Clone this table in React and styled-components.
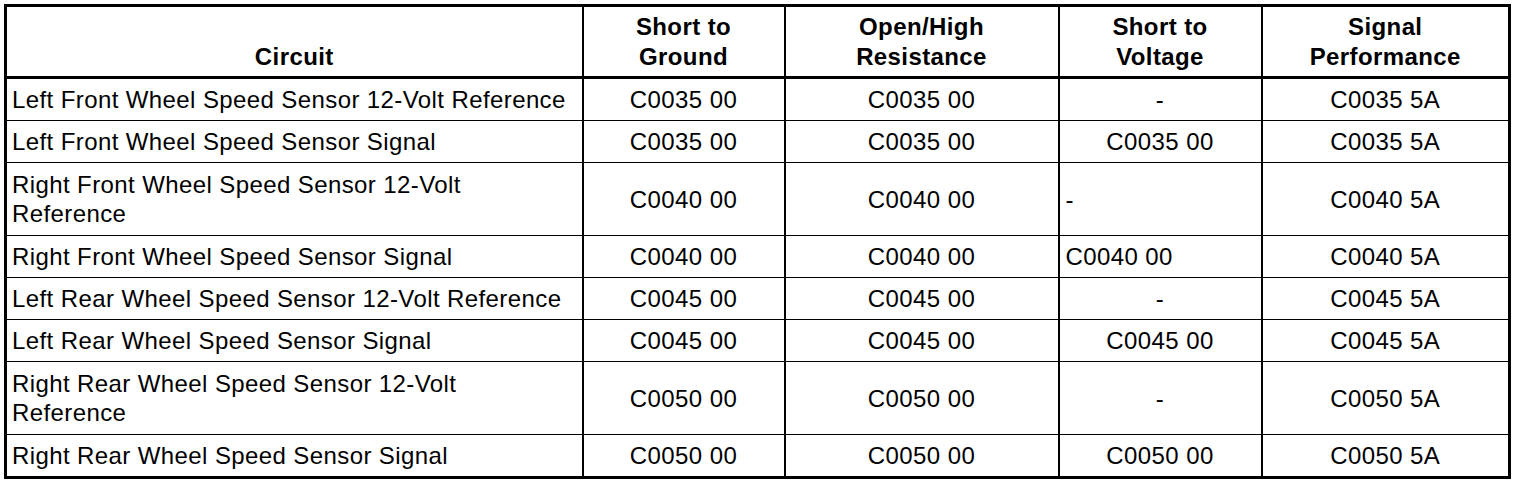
import React from "react";
import styled, { createGlobalStyle } from "styled-components";

const GlobalStyle = createGlobalStyle`
  body {
    margin: 0;
    background: #ffffff;
    font-family: "Liberation Sans", Arial, sans-serif;
    color: #000000;
  }
`;

const Page = styled.div`
  padding: 4px;
`;

const Table = styled.table`
  width: 1504px;
  table-layout: fixed;
  border-collapse: collapse;
  border: 3px solid #000;
  font-family: "Liberation Sans", Arial, sans-serif;
  font-size: 24px;
  letter-spacing: 0.4px;
  color: #000;
`;

const HeadCell = styled.th`
  border-left: 2px solid #000;
  border-right: 2px solid #000;
  border-bottom: 3px solid #000;
  padding: 5px 6px 4px;
  line-height: 30px;
  font-weight: bold;
  text-align: center;
  vertical-align: bottom;
`;

const Cell = styled.td`
  border: 1px solid #000;
  border-left: 2px solid #000;
  border-right: 2px solid #000;
  padding: ${({ $tall }) => ($tall ? "7px" : "6px")} ${({ $first }) => ($first ? "5px" : "6px")};
  line-height: 29px;
  text-align: ${({ $left }) => ($left ? "left" : "center")};
  vertical-align: middle;
  white-space: ${({ $first }) => ($first ? "normal" : "nowrap")};
`;

const CircuitName = styled.span`
  display: inline-block;
  max-width: ${({ $wrap }) => ($wrap ? "470px" : "none")};
`;

const columns = [
  { label: ["Circuit"], width: 577 },
  { label: ["Short to", "Ground"], width: 202 },
  { label: ["Open/High", "Resistance"], width: 274 },
  { label: ["Short to", "Voltage"], width: 203 },
  { label: ["Signal", "Performance"], width: 248 },
];

// circuit, short to ground, open/high, short to voltage, signal perf, wraps, voltage col left aligned
const rows = [
  ["Left Front Wheel Speed Sensor 12-Volt Reference", "C0035 00", "C0035 00", "-", "C0035 5A", false, false],
  ["Left Front Wheel Speed Sensor Signal", "C0035 00", "C0035 00", "C0035 00", "C0035 5A", false, false],
  ["Right Front Wheel Speed Sensor 12-Volt Reference", "C0040 00", "C0040 00", "-", "C0040 5A", true, true],
  ["Right Front Wheel Speed Sensor Signal", "C0040 00", "C0040 00", "C0040 00", "C0040 5A", false, true],
  ["Left Rear Wheel Speed Sensor 12-Volt Reference", "C0045 00", "C0045 00", "-", "C0045 5A", false, false],
  ["Left Rear Wheel Speed Sensor Signal", "C0045 00", "C0045 00", "C0045 00", "C0045 5A", false, false],
  ["Right Rear Wheel Speed Sensor 12-Volt Reference", "C0050 00", "C0050 00", "-", "C0050 5A", true, false],
  ["Right Rear Wheel Speed Sensor Signal", "C0050 00", "C0050 00", "C0050 00", "C0050 5A", false, false],
];

const App = () => {
  return (
    <Page>
      <GlobalStyle />
      <Table>
        <colgroup>
          {columns.map((c, i) => (
            <col key={i} style={{ width: c.width }} />
          ))}
        </colgroup>
        <thead>
          <tr>
            {columns.map((c, i) => (
              <HeadCell key={i}>
                {c.label.map((line, j) => (
                  <div key={j}>{line}</div>
                ))}
              </HeadCell>
            ))}
          </tr>
        </thead>
        <tbody>
          {rows.map((r, i) => (
            <tr key={i}>
              <Cell $first $left $tall={r[5]}>
                <CircuitName $wrap={r[5]}>{r[0]}</CircuitName>
              </Cell>
              <Cell>{r[1]}</Cell>
              <Cell>{r[2]}</Cell>
              <Cell $left={r[6]}>{r[3]}</Cell>
              <Cell>{r[4]}</Cell>
            </tr>
          ))}
        </tbody>
      </Table>
    </Page>
  );
};

export default App;
